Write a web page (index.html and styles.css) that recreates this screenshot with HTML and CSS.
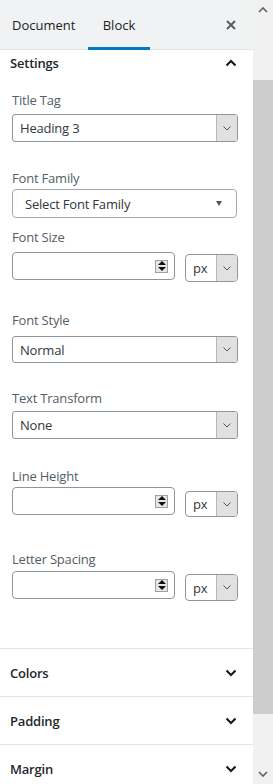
FILE: index.html
```html
<!DOCTYPE html>
<html lang="en">
<head>
    <meta charset="UTF-8">
    <title>Block settings</title>
    <link rel="stylesheet" href="styles.css">
</head>
<body>
    <div class="screen">
        <div class="sidebar">
            <div class="tabs">
                <button class="tab tab-doc">Document</button>
                <button class="tab tab-block is-active">Block</button>
                <button class="close" aria-label="Close">
                    <svg width="10" height="10" viewBox="0 0 10 10"><path d="M1 1L9 9M9 1L1 9" stroke="#555d66" stroke-width="2" fill="none"/></svg>
                </button>
            </div>

            <div class="panel panel-open">
                <div class="panel-head">
                    <span>Settings</span>
                    <svg class="chev" width="12" height="8" viewBox="0 0 12 8"><path d="M1.5 6.5L6 2L10.5 6.5" stroke="#191e23" stroke-width="2.2" fill="none"/></svg>
                </div>
                <div class="panel-body">
                    <div class="field f-title">
                        <label>Title Tag</label>
                        <div class="select">
                            <span class="select-value">Heading 3</span>
                            <span class="select-arrow"><svg width="8" height="5" viewBox="0 0 8 5"><path d="M0.5 0.5L4 4L7.5 0.5" stroke="#555" fill="none"/></svg></span>
                        </div>
                    </div>

                    <div class="field f-family">
                        <label>Font Family</label>
                        <div class="family-select">
                            <span>Select Font Family</span>
                            <span class="tri"></span>
                        </div>
                    </div>

                    <div class="field f-size">
                        <label>Font Size</label>
                        <div class="num-row">
                            <div class="num-input"><span class="spin"><i class="up"></i><i class="down"></i></span></div>
                            <div class="select unit unit-size">
                                <span class="select-value">px</span>
                                <span class="select-arrow"><svg width="8" height="5" viewBox="0 0 8 5"><path d="M0.5 0.5L4 4L7.5 0.5" stroke="#555" fill="none"/></svg></span>
                            </div>
                        </div>
                    </div>

                    <div class="field f-style">
                        <label>Font Style</label>
                        <div class="select">
                            <span class="select-value">Normal</span>
                            <span class="select-arrow"><svg width="8" height="5" viewBox="0 0 8 5"><path d="M0.5 0.5L4 4L7.5 0.5" stroke="#555" fill="none"/></svg></span>
                        </div>
                    </div>

                    <div class="field f-transform">
                        <label>Text Transform</label>
                        <div class="select">
                            <span class="select-value">None</span>
                            <span class="select-arrow"><svg width="8" height="5" viewBox="0 0 8 5"><path d="M0.5 0.5L4 4L7.5 0.5" stroke="#555" fill="none"/></svg></span>
                        </div>
                    </div>

                    <div class="field f-line">
                        <label>Line Height</label>
                        <div class="num-row">
                            <div class="num-input"><span class="spin"><i class="up"></i><i class="down"></i></span></div>
                            <div class="select unit unit-line">
                                <span class="select-value">px</span>
                                <span class="select-arrow"><svg width="8" height="5" viewBox="0 0 8 5"><path d="M0.5 0.5L4 4L7.5 0.5" stroke="#555" fill="none"/></svg></span>
                            </div>
                        </div>
                    </div>

                    <div class="field f-letter">
                        <label>Letter Spacing</label>
                        <div class="num-row">
                            <div class="num-input"><span class="spin"><i class="up"></i><i class="down"></i></span></div>
                            <div class="select unit unit-letter">
                                <span class="select-value">px</span>
                                <span class="select-arrow"><svg width="8" height="5" viewBox="0 0 8 5"><path d="M0.5 0.5L4 4L7.5 0.5" stroke="#555" fill="none"/></svg></span>
                            </div>
                        </div>
                    </div>
                </div>
            </div>

            <div class="panel">
                <div class="panel-head panel-head-closed">
                    <span>Colors</span>
                    <svg class="chev" width="12" height="8" viewBox="0 0 12 8"><path d="M1.5 1.5L6 6L10.5 1.5" stroke="#191e23" stroke-width="2.2" fill="none"/></svg>
                </div>
            </div>
            <div class="panel">
                <div class="panel-head panel-head-closed">
                    <span>Padding</span>
                    <svg class="chev" width="12" height="8" viewBox="0 0 12 8"><path d="M1.5 1.5L6 6L10.5 1.5" stroke="#191e23" stroke-width="2.2" fill="none"/></svg>
                </div>
            </div>
            <div class="panel">
                <div class="panel-head panel-head-closed">
                    <span>Margin</span>
                    <svg class="chev" width="12" height="8" viewBox="0 0 12 8"><path d="M1.5 1.5L6 6L10.5 1.5" stroke="#191e23" stroke-width="2.2" fill="none"/></svg>
                </div>
            </div>
        </div>

        <div class="scrollbar">
            <div class="sb-btn"><svg width="10" height="6" viewBox="0 0 10 6"><path d="M1 5L5 1L9 5" stroke="#606060" stroke-width="1.6" fill="none"/></svg></div>
            <div class="sb-track"><div class="sb-thumb"></div></div>
            <div class="sb-btn"><svg width="10" height="6" viewBox="0 0 10 6"><path d="M1 1L5 5L9 1" stroke="#606060" stroke-width="1.6" fill="none"/></svg></div>
        </div>
    </div>
</body>
</html>
```

FILE: styles.css
```css
* {
    margin: 0;
    padding: 0;
    box-sizing: border-box;
}

body {
    font-family: "Open Sans", "Noto Sans", sans-serif;
    font-size: 13px;
    letter-spacing: -0.2px;
    color: #191e23;
    background: #fff;
}

.screen {
    display: flex;
    width: 273px;
    height: 784px;
    overflow: hidden;
}

.sidebar {
    width: 253px;
    flex: none;
    background: #fff;
}

/* header tabs */
.tabs {
    display: flex;
    height: 50px;
    background: #f1f2f3;
    box-shadow: inset 0 -1px 0 #e2e4e7;
}

.tab {
    background: none;
    border: 0;
    border-bottom: 3px solid transparent;
    font: inherit;
    font-size: 13px;
    color: #191e23;
    padding-top: 3px;
}

.tab-doc {
    width: 88px;
    padding-left: 12px;
    text-align: left;
}

.tab-block {
    width: 62px;
}

.tab.is-active {
    border-bottom-color: #007cba;
}

.close {
    margin-left: auto;
    margin-right: 10px;
    width: 24px;
    background: none;
    border: 0;
    display: flex;
    align-items: center;
    justify-content: center;
}

/* panels */
.panel + .panel {
    border-top: 1px solid #e2e4e7;
}

.panel-head {
    display: flex;
    align-items: center;
    justify-content: space-between;
    height: 26px;
    padding: 0 16px 0 10px;
    font-weight: 600;
    color: #23282d;
}

.panel-head-closed {
    height: 47px;
}

.panel-body {
    padding: 15px 15px 47px 12px;
}

.field label {
    display: block;
    line-height: 18px;
    color: #555d66;
}

.f-title .select { margin-top: 5px; }
.f-family { margin-top: 27px; }
.f-family .family-select { margin-top: 2px; }
.f-size { margin-top: 10px; }
.f-size .num-row { margin-top: 6px; }
.f-style { margin-top: 29px; }
.f-style .select { margin-top: 7px; height: 27px; }
.f-transform { margin-top: 26px; }
.f-transform .select { margin-top: 4px; }
.f-line { margin-top: 28px; }
.f-line .num-row { margin-top: 2px; }
.f-letter { margin-top: 33px; }
.f-letter .num-row { margin-top: 3px; }

.select {
    display: flex;
    height: 28px;
    border: 1px solid #8d96a0;
    border-radius: 3px;
    overflow: hidden;
    background: #fff;
}

.select-value {
    flex: 1;
    padding-left: 7px;
    display: flex;
    align-items: center;
    color: #32373c;
}

.select-arrow {
    width: 21px;
    background: #e1e1e1;
    border-left: 1px solid #b5b9bd;
    display: flex;
    align-items: center;
    justify-content: center;
}

.family-select {
    display: flex;
    align-items: center;
    justify-content: space-between;
    height: 29px;
    width: 225px;
    padding: 0 14px 0 12px;
    border: 1px solid #a7aaad;
    border-radius: 4px;
    color: #32373c;
}

.tri {
    width: 0;
    height: 0;
    border-left: 3px solid transparent;
    border-right: 3px solid transparent;
    border-top: 5px solid #555;
}

.num-row {
    display: flex;
    align-items: flex-start;
}

.num-input {
    width: 163px;
    height: 28px;
    border: 1px solid #8d96a0;
    border-radius: 4px;
    display: flex;
    align-items: center;
    justify-content: flex-end;
    padding-right: 6px;
}

.spin {
    width: 13px;
    height: 13px;
    background: #e6e6e6;
    border: 1px solid #a0a0a0;
    display: flex;
    flex-direction: column;
    align-items: center;
    justify-content: space-around;
}

.spin i {
    width: 0;
    height: 0;
    border-left: 4px solid transparent;
    border-right: 4px solid transparent;
}

.spin .up {
    border-bottom: 4px solid #111;
}

.spin .down {
    border-top: 4px solid #111;
}

.unit {
    width: 53px;
    margin-left: 10px;
    border-radius: 4px;
}

.unit .select-value {
    padding-left: 7px;
}

.unit-size { margin-top: 2px; }
.unit-line { margin-top: 4px; height: 26px; }
.unit-letter { margin-top: 3px; height: 27px; }

/* scrollbar */
.scrollbar {
    width: 20px;
    flex: none;
    background: #f1f1f1;
    display: flex;
    flex-direction: column;
}

.sb-btn {
    height: 20px;
    display: flex;
    align-items: center;
    justify-content: center;
}

.sb-track {
    flex: 1;
    padding-top: 60px;
}

.sb-thumb {
    height: 634px;
    background: #cdcdcd;
}
```
